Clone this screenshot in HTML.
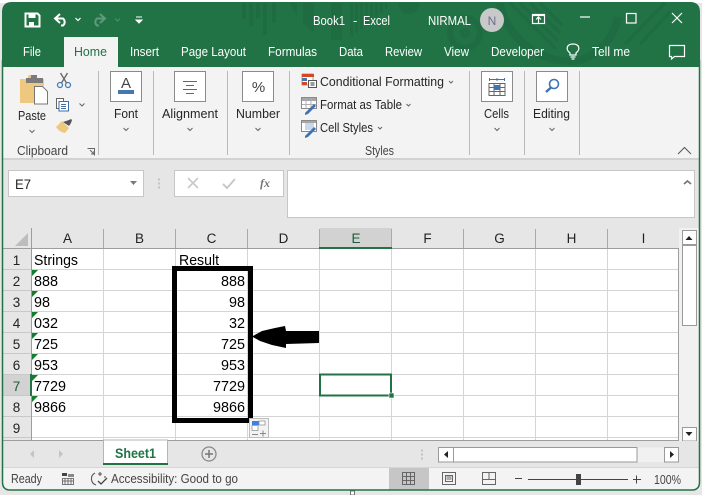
<!DOCTYPE html>
<html><head><meta charset="utf-8"><style>
html,body{margin:0;padding:0;width:702px;height:495px;overflow:hidden;background:#fff}
svg{display:block}
text{font-family:"Liberation Sans",sans-serif;font-size:12.5px;fill:#262626;white-space:pre}
.w{fill:#fff;font-size:12.800px}.s{font-size:14.400px;fill:#000}.h{font-size:13.500px;fill:#222;text-anchor:middle}
.g{stroke:#d4d4d4;stroke-width:1;fill:none}
.i{fill:none;stroke:#fff;stroke-width:1.2}
.c{fill:none;stroke:#666;stroke-width:1}
</style></head><body>
<svg width="702" height="495" viewBox="0 0 702 495" xmlns="http://www.w3.org/2000/svg">
<rect width="702" height="495" fill="#e6e6e6"/>
<rect x="0" y="0" width="702" height="3" fill="#fff"/>
<path d="M2 67V12Q2 2 12 2H690Q700 2 700 12V67Z" fill="#217346"/>
<!-- pattern -->
<g fill="#1f6c42">
<rect x="242" y="3" width="4" height="16"/><rect x="249" y="3" width="4" height="23"/><rect x="256" y="3" width="4" height="16"/><rect x="263" y="3" width="4" height="32"/><rect x="272" y="3" width="4" height="20"/>
<path d="M290 3h7v14zM303 3h11v30l-11-10zM331 3h11v37h-11zM350 3h3v34h-3zM355 3h3v30h-3zM360 3h3v26h-3zM365 3h3v22h-3zM370 3h3v18h-3zM375 3h3v14h-3zM380 3h3v10h-3zM385 3h2v6h-2z"/>
<path d="M398 3h22q-2 11-11 11t-11-11z"/>
</g>
<g fill="none" stroke="#1f6c42">
<circle cx="465" cy="33" r="15" stroke-width="6"/><circle cx="465" cy="33" r="3" stroke-width="4"/>
<path d="M500 3c4 26 30 58 70 58 26 0 45-24 48-44" stroke-width="8"/>
<path d="M510 3l46 46M520 3l38 38M530 3l30 30M540 3l22 22M625 44l40-41M640 44l30-32" stroke-width="3.5"/>
</g>
<!-- QAT -->
<path d="M25.500 13.500h12l2 2v11h-14z" fill="none" stroke="#fff" stroke-width="2"/><rect x="28.500" y="14" width="7" height="4" fill="#fff"/><rect x="29" y="22" width="5" height="4" fill="#fff"/>
<path d="M60 14l-5 4.500 5 4.500" fill="none" stroke="#fff" stroke-width="2"/><path d="M55 18.500h8a4.500 4.500 0 0 1 0 7h-2" fill="none" stroke="#fff" stroke-width="2"/>
<path d="M75.500 18l2.500 2.500 2.500-2.500" class="i"/>
<path d="M100 14l5 4.500-5 4.500" fill="none" stroke="#5d9b7b" stroke-width="2"/><path d="M105 18.500h-8a4.500 4.500 0 0 0 0 7h2" fill="none" stroke="#5d9b7b" stroke-width="2"/>
<path d="M115 18.500l2.500 2.500 2.500-2.500" fill="none" stroke="#4f9270" stroke-width="1"/>
<path d="M136 17h6M136 20h6l-3 3z" fill="#fff" stroke="#fff" stroke-width="1"/>
<text class="w" x="313" y="25" textLength="32" lengthAdjust="spacingAndGlyphs">Book1</text>
<text class="w" x="353" y="25">-</text>
<text class="w" x="363" y="25" textLength="27" lengthAdjust="spacingAndGlyphs">Excel</text>
<text class="w" x="428" y="25" textLength="43" lengthAdjust="spacingAndGlyphs">NIRMAL</text>
<circle cx="492" cy="20" r="12" fill="#c9c9c9"/><text x="492" y="25" text-anchor="middle" style="fill:#6f6f8f;font-size:12px">N</text>
<rect x="532.500" y="14.500" width="12" height="9" class="i"/><path d="M536 19.500l2.500-2.500 2.500 2.500M538.500 17v6" class="i"/><path d="M532 15.500h13" class="i"/>
<path d="M580 17h10" class="i"/><rect x="626.500" y="13.500" width="9.500" height="9.500" class="i"/><path d="M672 13l10 10M682 13l-10 10" class="i"/>
<!-- tabs -->
<rect x="64" y="37" width="54" height="30" fill="#f3f3f3"/>
<text class="w" x="23" y="56" textLength="18" lengthAdjust="spacingAndGlyphs">File</text>
<text style="fill:#217346;font-size:12.800px" x="74" y="56" textLength="33" lengthAdjust="spacingAndGlyphs">Home</text>
<text class="w" x="130" y="56" textLength="29" lengthAdjust="spacingAndGlyphs">Insert</text>
<text class="w" x="181" y="56" textLength="65" lengthAdjust="spacingAndGlyphs">Page Layout</text>
<text class="w" x="268" y="56" textLength="49" lengthAdjust="spacingAndGlyphs">Formulas</text>
<text class="w" x="339" y="56" textLength="24" lengthAdjust="spacingAndGlyphs">Data</text>
<text class="w" x="385" y="56" textLength="37" lengthAdjust="spacingAndGlyphs">Review</text>
<text class="w" x="444" y="56" textLength="25" lengthAdjust="spacingAndGlyphs">View</text>
<text class="w" x="491" y="56" textLength="53" lengthAdjust="spacingAndGlyphs">Developer</text>
<text class="w" x="592" y="56" textLength="38" lengthAdjust="spacingAndGlyphs">Tell me</text>
<path d="M570 53c-5-4-3-9 3-9s8 5 3 9v2h-6zM570.500 57h5M571.500 59h3" class="i"/>
<path d="M669.500 45.500h15v11h-10l-3 2.500v-2.500h-2z" class="i"/>
<!-- ribbon -->
<rect x="2" y="67" width="698" height="91" fill="#f3f3f3"/>
<rect x="2" y="158" width="698" height="2" fill="#d2d2d2"/>
<g stroke="#b9b9b9"><path d="M98.500 71V155M153.500 71V155M227.500 71V155M289.500 71V155M469.500 71V155M524.500 71V155M579.500 71V155"/></g>
<!-- clipboard -->
<path d="M20 79h8v-2q0-2 2-2h4q2 0 2 2v2h8v7h-8v17h-16z" fill="#edc87e"/><rect x="26" y="78" width="17" height="5" fill="#7b7b7b"/><rect x="31" y="75" width="6" height="5" fill="#7b7b7b"/>
<path d="M34.500 86.500h8l5 5v12.500h-13z" fill="#fff" stroke="#777"/>
<g fill="none" stroke="#4a7ebb" stroke-width="1.300"><circle cx="60" cy="85" r="2.500"/><circle cx="68" cy="85" r="2.500"/></g><path d="M61.500 83l6-10M66.500 83l-6-10" stroke="#666" stroke-width="1.300"/>
<path d="M56.500 98.500h7l0 10h-7z" fill="#fff" stroke="#666"/><path d="M61.500 101.500h7v9.500h-9.500v-9.500z" fill="#fff" stroke="#3f6fa8"/><path d="M61 104.500h5M61 106.500h5M61 108.500h5" stroke="#3f6fa8"/>
<path d="M79.500 103.500l2.500 2.500 2.500-2.500" class="c"/>
<path d="M56 127l6-6 7 7-4 5q-6-1-9-6z" fill="#edc87e"/><path d="M63 122l6-2 2-1 1 1-1 3-2 3z" fill="#555"/>
<text x="18" y="120" textLength="28" lengthAdjust="spacingAndGlyphs">Paste</text>
<path d="M29.500 130l2.500 2.500 2.500-2.500" class="c"/>
<text x="17" y="155" textLength="51" lengthAdjust="spacingAndGlyphs" style="fill:#444">Clipboard</text>
<path d="M87.500 148.500h7v7M90 150l4 4M94 151v3h-3" fill="none" stroke="#666"/>
<!-- group boxes -->
<g fill="#fff" stroke="#8b8b8b"><rect x="110.500" y="71.500" width="31" height="30"/><rect x="174.500" y="71.500" width="31" height="30"/><rect x="242.500" y="71.500" width="31" height="30"/><rect x="481.500" y="71.500" width="31" height="30"/><rect x="536.500" y="71.500" width="31" height="30"/></g>
<rect x="118" y="90" width="16" height="4" fill="#4a76b0"/>
<text x="126" y="88" text-anchor="middle" style="font-size:15px;fill:#444">A</text>
<path d="M183 81.500h14M186 85.500h8M183 89.500h14M186 93.500h8" stroke="#666"/>
<text x="258.500" y="92" text-anchor="middle" style="font-size:15px;fill:#444">%</text>
<g fill="none" stroke="#666"><path d="M489 83.500h16v12h-16zM489 87.500h16M489 91.500h16M494 83.500v12M500 83.500v12"/></g>
<rect x="493.500" y="85" width="6" height="5" fill="#3f72b5"/><path d="M489.500 79.500h15M489.500 78v3M504.500 78v3M497 78v3" stroke="#3f72b5"/>
<circle cx="554" cy="84" r="4.500" fill="none" stroke="#3f72b5" stroke-width="1.600"/><path d="M551 87.500l-5 4.500" stroke="#3f72b5" stroke-width="2.400"/>
<text x="114" y="118" textLength="24" lengthAdjust="spacingAndGlyphs">Font</text>
<text x="162" y="118" textLength="56" lengthAdjust="spacingAndGlyphs">Alignment</text>
<text x="236" y="118" textLength="44" lengthAdjust="spacingAndGlyphs">Number</text>
<text x="484" y="118" textLength="25" lengthAdjust="spacingAndGlyphs">Cells</text>
<text x="533" y="118" textLength="37" lengthAdjust="spacingAndGlyphs">Editing</text>
<g class="c"><path class="c" d="M123.500 128l2.500 2.500 2.500-2.500M187.500 128l2.500 2.500 2.500-2.500M255.500 128l2.500 2.500 2.500-2.500M494.500 128l2.500 2.500 2.500-2.500M549.500 128l2.500 2.500 2.500-2.500"/></g>
<!-- styles -->
<rect x="302" y="74" width="11" height="11" fill="#fff" stroke="#8a8a8a" stroke-width=".8"/><rect x="302" y="74" width="12" height="3" fill="#d24726"/><rect x="302" y="78" width="5" height="3" fill="#4a76b0"/><rect x="302" y="82" width="5" height="3" fill="#d24726"/>
<rect x="308.500" y="80.500" width="8" height="7" fill="#fff" stroke="#555"/><path d="M310.500 83h4M310.500 85h4" stroke="#333"/>
<g fill="#fff" stroke="#8a8a8a"><rect x="301.500" y="97.500" width="15" height="11"/><rect x="301.500" y="120.500" width="15" height="11"/></g>
<rect x="302" y="98" width="14" height="3" fill="#a6a6a6"/><path d="M306 98v10M311 98v10M302 104.500h14" stroke="#b0b0b0"/>
<rect x="305" y="123" width="9" height="7" fill="#c9d8ec"/><rect x="302" y="121" width="14" height="2" fill="#a6a6a6"/>
<path d="M305 113l9-9 2 2-8 8-3 1zM305 136l9-9 2 2-8 8-3 1z" fill="#3f72b5"/>
<text x="320" y="86" textLength="124" lengthAdjust="spacingAndGlyphs">Conditional Formatting</text>
<text x="320" y="109" textLength="82" lengthAdjust="spacingAndGlyphs">Format as Table</text>
<text x="320" y="132" textLength="53" lengthAdjust="spacingAndGlyphs">Cell Styles</text>
<path d="M449 81l2 2 2-2M406.500 104l2 2 2-2M378 127l2 2 2-2" class="c" stroke-width=".9"/>
<text x="365" y="155" textLength="29" lengthAdjust="spacingAndGlyphs" style="fill:#444">Styles</text>
<path d="M678 154l6.500-6.500 6.500 6.500" fill="none" stroke="#555" stroke-width="1"/>
<!-- formula bar -->
<rect x="8.500" y="170.500" width="135" height="26" fill="#fff" stroke="#c6c6c6"/>
<text x="15" y="189" textLength="16" lengthAdjust="spacingAndGlyphs" style="font-size:13.500px">E7</text>
<path d="M130 181h7l-3.500 4z" fill="#7a7a7a"/>
<path d="M159 178.500v2M159 182.500v2M159 186.500v2" stroke="#b5b5b5" stroke-width="1.500"/>
<rect x="174.500" y="170.500" width="109" height="26" fill="#fff" stroke="#c6c6c6"/>
<path d="M188 178l10 10M198 178l-10 10" stroke="#c9c9c9" stroke-width="1.600"/>
<path d="M223 184l4 4 8-9" fill="none" stroke="#c9c9c9" stroke-width="2"/>
<text x="260" y="187" style="font:italic bold 12px 'Liberation Serif',serif;fill:#777">fx</text>
<rect x="287.500" y="170.500" width="407" height="47" fill="#fff" stroke="#c6c6c6"/>
<path d="M684 184l3.500-3 3.500 3" fill="none" stroke="#777" stroke-width="1.800"/>
<!-- sheet -->
<rect x="32" y="249" width="646" height="191" fill="#fff"/>
<rect x="3" y="228" width="29" height="212" fill="#e6e6e6"/>
<rect x="320" y="228" width="72" height="20" fill="#d2d2d2"/>
<rect x="3" y="375" width="29" height="21" fill="#d2d2d2"/>
<path d="M28 233v13H15z" fill="#bdbdbd"/>
<path d="M32 269.500H678M32 290.500H678M32 311.500H678M32 332.500H678M32 353.500H678M32 374.500H678M32 395.500H678M32 416.500H678M32 437.500H678M103.500 249V440M175.500 249V440M247.500 249V440M319.500 249V440M391.500 249V440M463.500 249V440M535.500 249V440M607.500 249V440" class="g"/>
<path d="M3 269.500H32M3 290.500H32M3 311.500H32M3 332.500H32M3 353.500H32M3 374.500H32M3 395.500H32M3 416.500H32M3 437.500H32" stroke="#c8c8c8"/>
<path d="M31.500 228V440M3 248.500H678M678.500 248V440M3 440.500H679" stroke="#9d9d9d" fill="none"/>
<path d="M103.500 229V248M175.500 229V248M247.500 229V248M319.500 229V248M391.500 229V248M463.500 229V248M535.500 229V248M607.500 229V248" stroke="#a9a9a9"/>
<rect x="319" y="247" width="73" height="2" fill="#217346"/><rect x="30" y="374" width="2" height="22" fill="#217346"/>
<text class="h" x="67.500" y="243">A</text><text class="h" x="139.500" y="243">B</text><text class="h" x="211.500" y="243">C</text><text class="h" x="283.500" y="243">D</text><text class="h" x="356" y="243" style="fill:#1c5c3a">E</text><text class="h" x="427.500" y="243">F</text><text class="h" x="499.500" y="243">G</text><text class="h" x="571.500" y="243">H</text><text class="h" x="643.500" y="243">I</text>
<text class="h" x="16.500" y="265">1</text><text class="h" x="16.500" y="286">2</text><text class="h" x="16.500" y="307">3</text><text class="h" x="16.500" y="328">4</text><text class="h" x="16.500" y="349">5</text><text class="h" x="16.500" y="370">6</text><text class="h" x="16.500" y="391" style="fill:#1c5c3a">7</text><text class="h" x="16.500" y="412">8</text><text class="h" x="16.500" y="433">9</text>
<text class="s" x="34" y="265" textLength="44" lengthAdjust="spacingAndGlyphs">Strings</text>
<text class="s" x="179" y="265" textLength="40" lengthAdjust="spacingAndGlyphs">Result</text>
<text class="s" x="34" y="286" textLength="24" lengthAdjust="spacingAndGlyphs">888</text>
<text class="s" x="34" y="307" textLength="16" lengthAdjust="spacingAndGlyphs">98</text>
<text class="s" x="34" y="328" textLength="24" lengthAdjust="spacingAndGlyphs">032</text>
<text class="s" x="34" y="349" textLength="24" lengthAdjust="spacingAndGlyphs">725</text>
<text class="s" x="34" y="370" textLength="24" lengthAdjust="spacingAndGlyphs">953</text>
<text class="s" x="34" y="391" textLength="32" lengthAdjust="spacingAndGlyphs">7729</text>
<text class="s" x="34" y="412" textLength="32" lengthAdjust="spacingAndGlyphs">9866</text>
<text class="s" x="221" y="286" textLength="24" lengthAdjust="spacingAndGlyphs">888</text>
<text class="s" x="229" y="307" textLength="16" lengthAdjust="spacingAndGlyphs">98</text>
<text class="s" x="229" y="328" textLength="16" lengthAdjust="spacingAndGlyphs">32</text>
<text class="s" x="221" y="349" textLength="24" lengthAdjust="spacingAndGlyphs">725</text>
<text class="s" x="221" y="370" textLength="24" lengthAdjust="spacingAndGlyphs">953</text>
<text class="s" x="213" y="391" textLength="32" lengthAdjust="spacingAndGlyphs">7729</text>
<text class="s" x="213" y="412" textLength="32" lengthAdjust="spacingAndGlyphs">9866</text>
<path d="M32 270h6l-6 6zM32 291h6l-6 6zM32 312h6l-6 6zM32 333h6l-6 6zM32 354h6l-6 6zM32 375h6l-6 6zM32 396h6l-6 6z" fill="#127d2c"/>
<rect x="174.500" y="268.500" width="76" height="152" fill="none" stroke="#000" stroke-width="5"/>
<path d="M252 336.500L262 331L275 328L285 326L286 331H319V343L286 344V348L272 345L260 341Z" fill="#000"/>
<rect x="320" y="374.500" width="71" height="21" fill="none" stroke="#217346" stroke-width="2"/>
<rect x="389" y="393" width="5" height="5" fill="#217346" stroke="#fff" stroke-width=".6"/>
<rect x="249.500" y="418.500" width="19" height="19" fill="#f3f3f3" stroke="#bdbdbd"/>
<rect x="252" y="421" width="7" height="4" fill="#3f7fe0"/><rect x="259" y="421" width="6" height="4" fill="#fff" stroke="#888" stroke-width=".7"/><rect x="252" y="425.500" width="6" height="5" fill="#fff" stroke="#888" stroke-width=".7"/><path d="M260 433.500h6M263 430.500v6M252 434.500h6" stroke="#888"/>
<!-- scroll v -->
<rect x="679" y="228" width="21" height="213" fill="#f1f1f1"/>
<rect x="682.500" y="230.500" width="14" height="14" fill="#fff" stroke="#9a9a9a"/><path d="M685.500 240h7l-3.500-4z" fill="#222"/>
<rect x="682.500" y="245.500" width="14" height="80" fill="#fff" stroke="#9a9a9a"/>
<rect x="682.500" y="427.500" width="14" height="13.500" fill="#fff" stroke="#9a9a9a"/><path d="M685.500 432h7l-3.500 4z" fill="#222"/>
<!-- tab bar -->
<rect x="3" y="441" width="697" height="27" fill="#e6e6e6"/>
<path d="M34 450v8l-4-4zM59 450v8l4-4z" fill="#c4c4c4"/>
<rect x="103.500" y="440" width="64" height="24" fill="#fff" stroke="#b5b5b5"/><rect x="103" y="463" width="65" height="2" fill="#217346"/>
<text x="115" y="458" textLength="41" lengthAdjust="spacingAndGlyphs" style="font-weight:bold;fill:#217346;font-size:13.500px">Sheet1</text>
<circle cx="209" cy="454" r="7" fill="none" stroke="#8a8a8a" stroke-width="1.300"/><path d="M205 454h8M209 450v8" stroke="#777" stroke-width="1.500"/>
<path d="M422 449.500v2M422 453.500v2M422 457.500v2" stroke="#b5b5b5" stroke-width="1.500"/>
<rect x="438.500" y="447.500" width="240" height="14.500" fill="#f1f1f1" stroke="none"/>
<rect x="438.500" y="447.500" width="15" height="14.500" fill="#fff" stroke="#9a9a9a"/><path d="M448 451v7l-4-3.500z" fill="#222"/>
<rect x="453.500" y="447.500" width="183.500" height="14.500" fill="#fff" stroke="#9a9a9a"/>
<rect x="664.500" y="447.500" width="14" height="14.500" fill="#fff" stroke="#9a9a9a"/><path d="M670 451v7l4-3.500z" fill="#222"/>
<!-- status -->
<rect x="3" y="468" width="697" height="22" fill="#f3f3f3"/>
<path d="M3 467.500H700" stroke="#d6d6d6"/>
<text x="11" y="483" textLength="31" lengthAdjust="spacingAndGlyphs" style="fill:#444">Ready</text>
<rect x="62" y="473" width="5" height="3" fill="#444"/><rect x="68" y="474" width="6" height="3" fill="#888"/><path d="M62.500 478.500h11v6h-11zM62.500 481h11M65 478.500v6M68 478.500v6M71 478.500v6" stroke="#555" fill="none" stroke-width=".8"/>
<path d="M95 473a6.500 6.500 0 0 0 1 12M100 472v4M98 474h4M105 476v2" fill="none" stroke="#555" stroke-width="1.100"/><path d="M98 481l3 3 6-6" fill="none" stroke="#444" stroke-width="1.300"/>
<text x="111" y="483" textLength="127" lengthAdjust="spacingAndGlyphs" style="fill:#444">Accessibility: Good to go</text>
<rect x="389" y="468" width="40" height="22" fill="#c6c6c6"/>
<path d="M402.500 472.500h12v12h-12zM402.500 476.500h12M402.500 480.500h12M406.500 472.500v12M410.500 472.500v12" fill="none" stroke="#666"/>
<path d="M442.500 472.500h13v12h-13zM445.500 475.500h7v6h-7zM446.500 477h5M446.500 479h5" fill="none" stroke="#666"/>
<path d="M482.500 472.500h13v12h-13zM482.500 479.500h6.500v-7M489 479.500h6.500" fill="none" stroke="#666"/>
<path d="M515 478.500h7" stroke="#444"/><path d="M528 479.500H628" stroke="#444"/><rect x="576" y="474" width="5" height="11" fill="#444"/><path d="M633 479.500h8M636.500 475.500v8" stroke="#444"/>
<text x="654" y="484" textLength="27" lengthAdjust="spacingAndGlyphs" style="fill:#444">100%</text>
<!-- frame -->
<path d="M2.500 60V482Q2.500 490 10 490H692Q699.500 490 699.500 482V60" fill="none" stroke="#217346" stroke-width="1.500"/>
<path d="M350.500 491h4v4h-4z" fill="#fff" stroke="#555" stroke-width=".8"/>
</svg>
</body></html>
